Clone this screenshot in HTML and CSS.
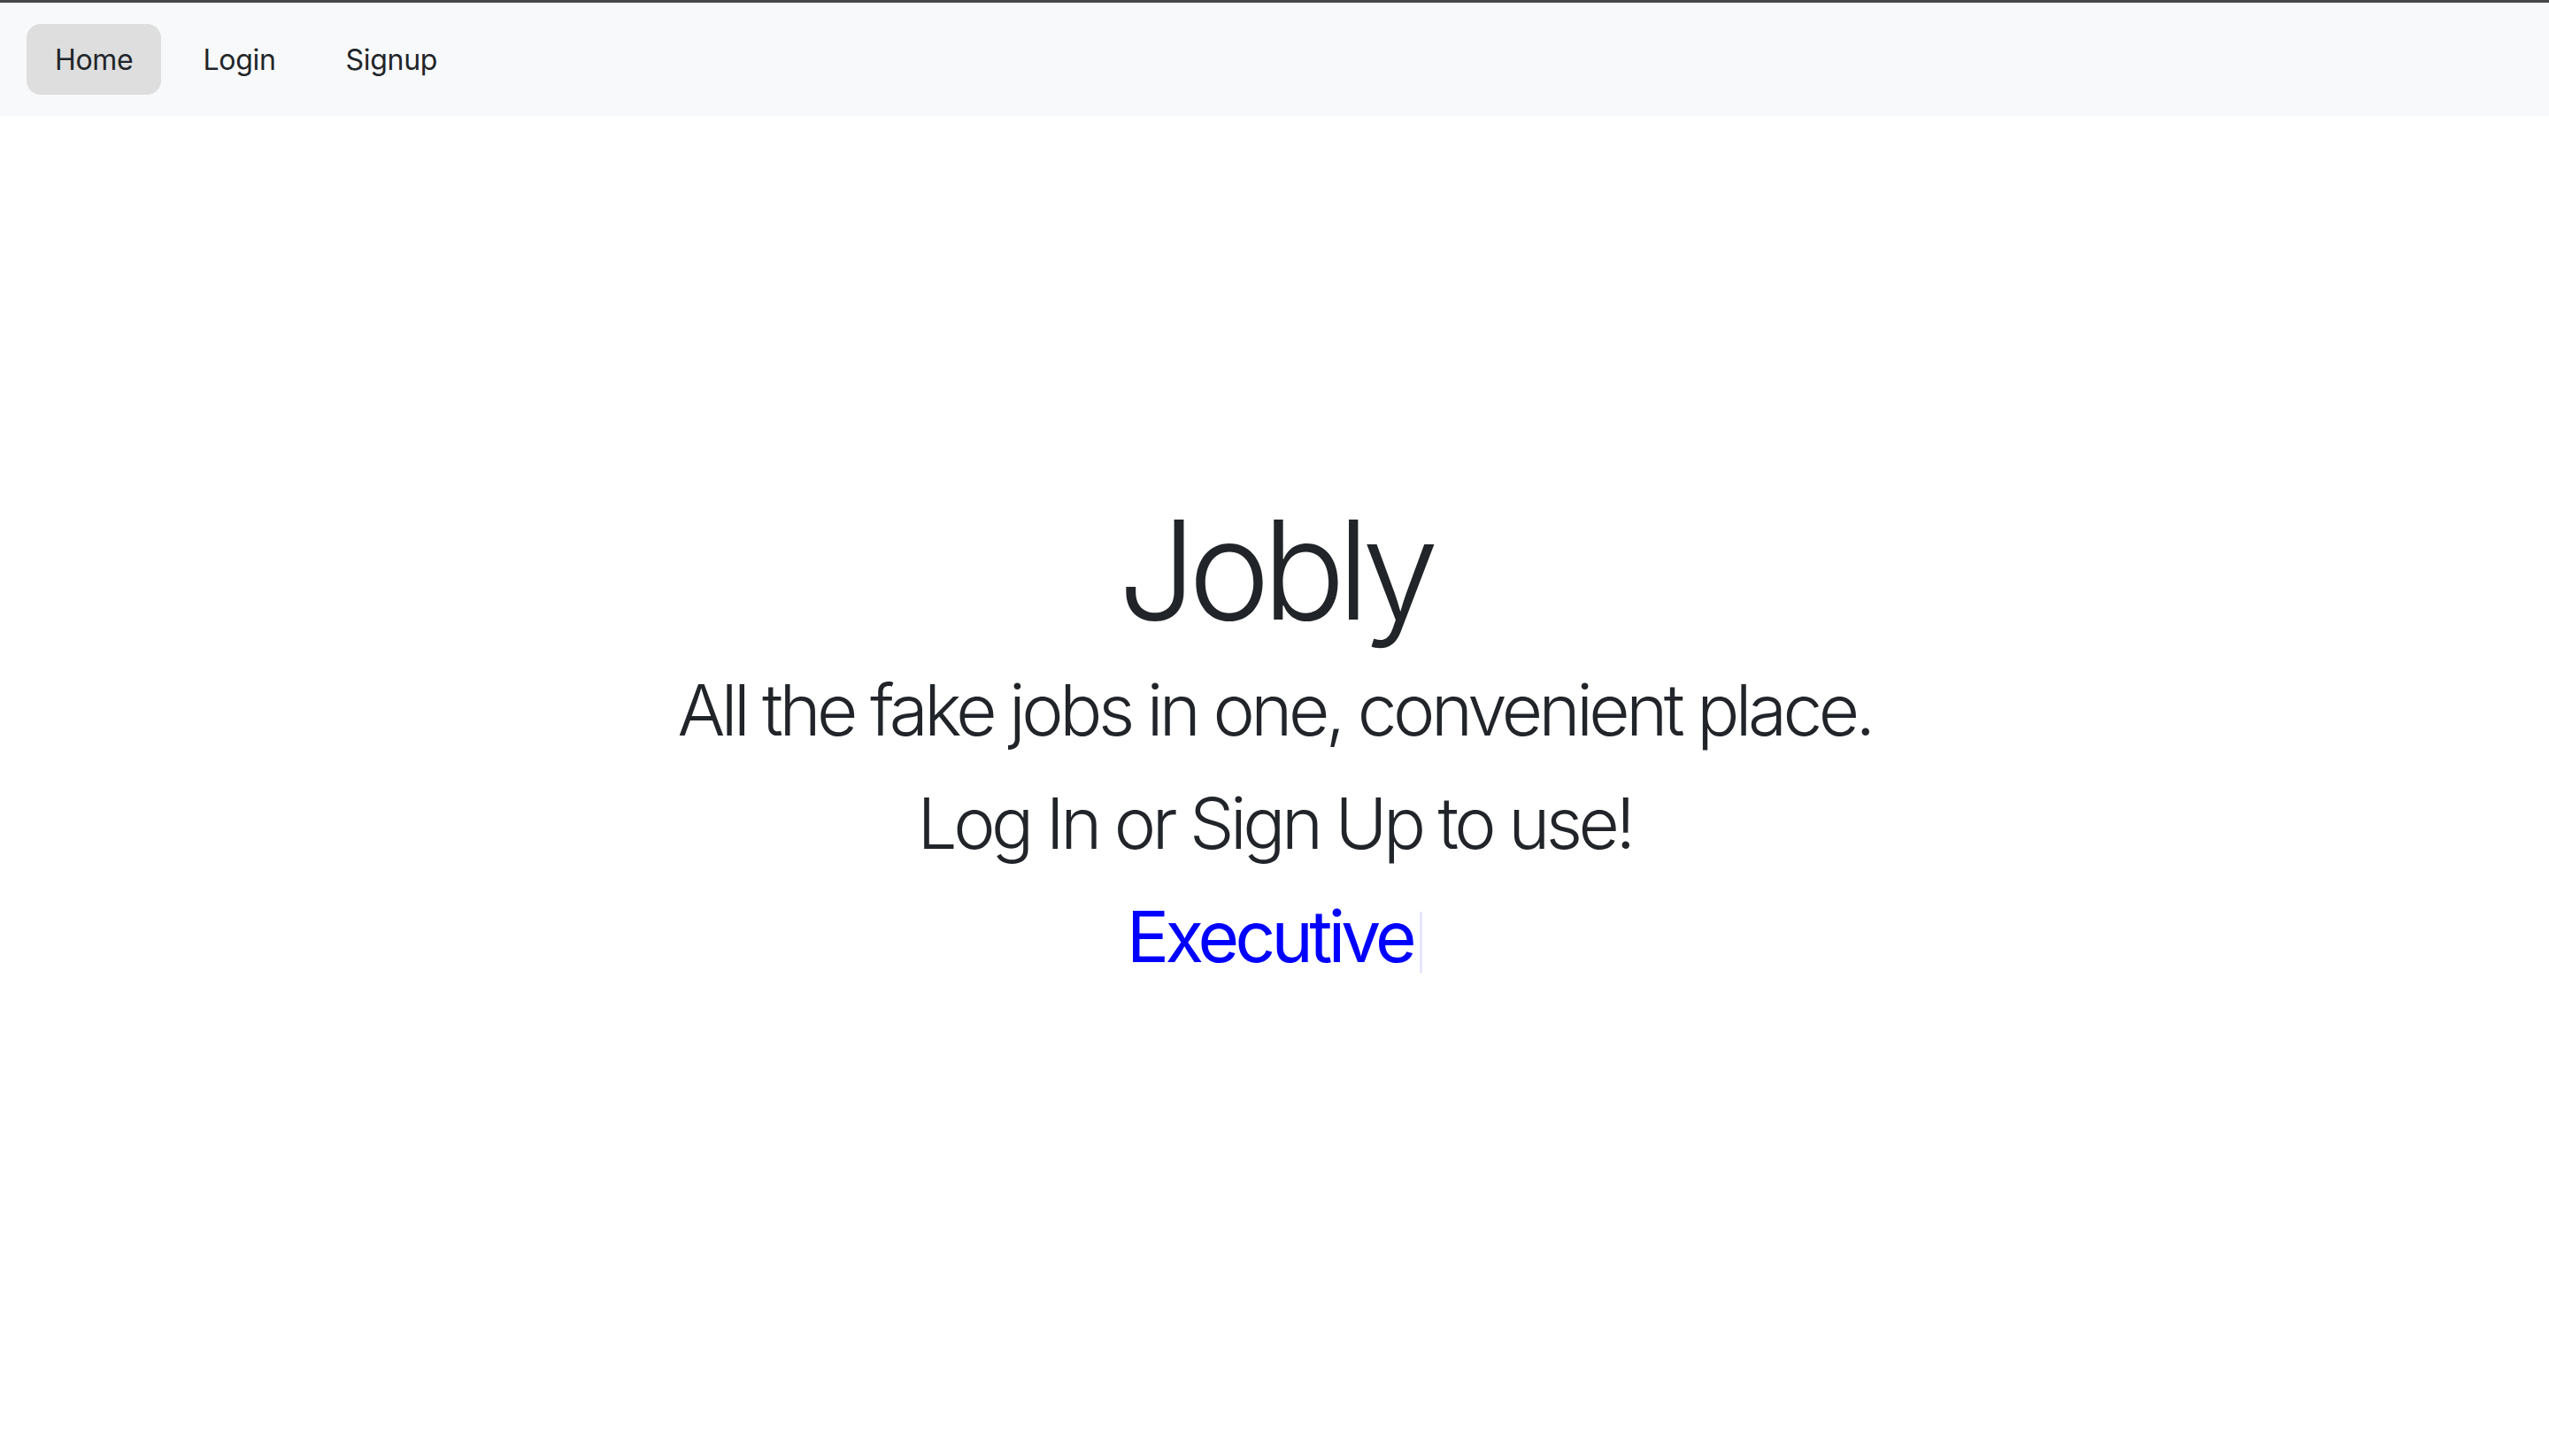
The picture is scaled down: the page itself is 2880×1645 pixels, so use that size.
FILE: index.html
```html
<!DOCTYPE html>
<html lang="en">
<head>
<meta charset="utf-8">
<title>Jobly</title>
<link rel="stylesheet" href="styles.css">
</head>
<body>
<nav class="navbar">
  <a class="nav-link active" href="#">Home</a>
  <a class="nav-link" href="#">Login</a>
  <a class="nav-link" href="#">Signup</a>
</nav>
<main class="home">
  <h1 class="title">Jobly</h1>
  <p class="lead">All the fake jobs in one, convenient place.</p>
  <p class="cta">Log In or Sign Up to use!</p>
  <p class="typed"><span class="typed-text">Executive</span><span class="caret"></span></p>
</main>
</body>
</html>
```

FILE: styles.css
```css
html, body {
  margin: 0;
  padding: 0;
}
body {
  background: #ffffff;
  color: #212529;
  font-family: Inter, "Noto Sans", "Liberation Sans", sans-serif;
  font-size: 32px;
}
.navbar {
  display: flex;
  align-items: center;
  gap: 15px;
  height: 128px;
  padding: 0 30px;
  background: #f8f9fa;
  border-top: 3px solid #474747;
}
.nav-link {
  display: flex;
  align-items: center;
  height: 80px;
  padding: 0 32px;
  border-radius: 16px;
  color: #212529;
  text-decoration: none;
  font-size: 32px;
  font-weight: 400;
  letter-spacing: -0.3px;
}
.nav-link.active {
  background: #dedede;
}
.home {
  display: flex;
  flex-direction: column;
  align-items: center;
  padding-top: 419px;
}
.title {
  margin: 0 0 17px;
  font-size: 156px;
  font-weight: 300;
  line-height: 1.2;
  letter-spacing: -9px;
}
.lead, .cta, .typed {
  margin: 0 0 32px;
  font-size: 80px;
  font-weight: 300;
  line-height: 1.2;
  letter-spacing: -4.5px;
}
.typed {
  display: flex;
  align-items: center;
  color: #0000ff;
  font-weight: 400;
  letter-spacing: -4.7px;
}
.caret {
  display: inline-block;
  width: 3px;
  height: 69px;
  margin-left: 8px;
  margin-top: 12px;
  background: #e6e6ff;
}
```
